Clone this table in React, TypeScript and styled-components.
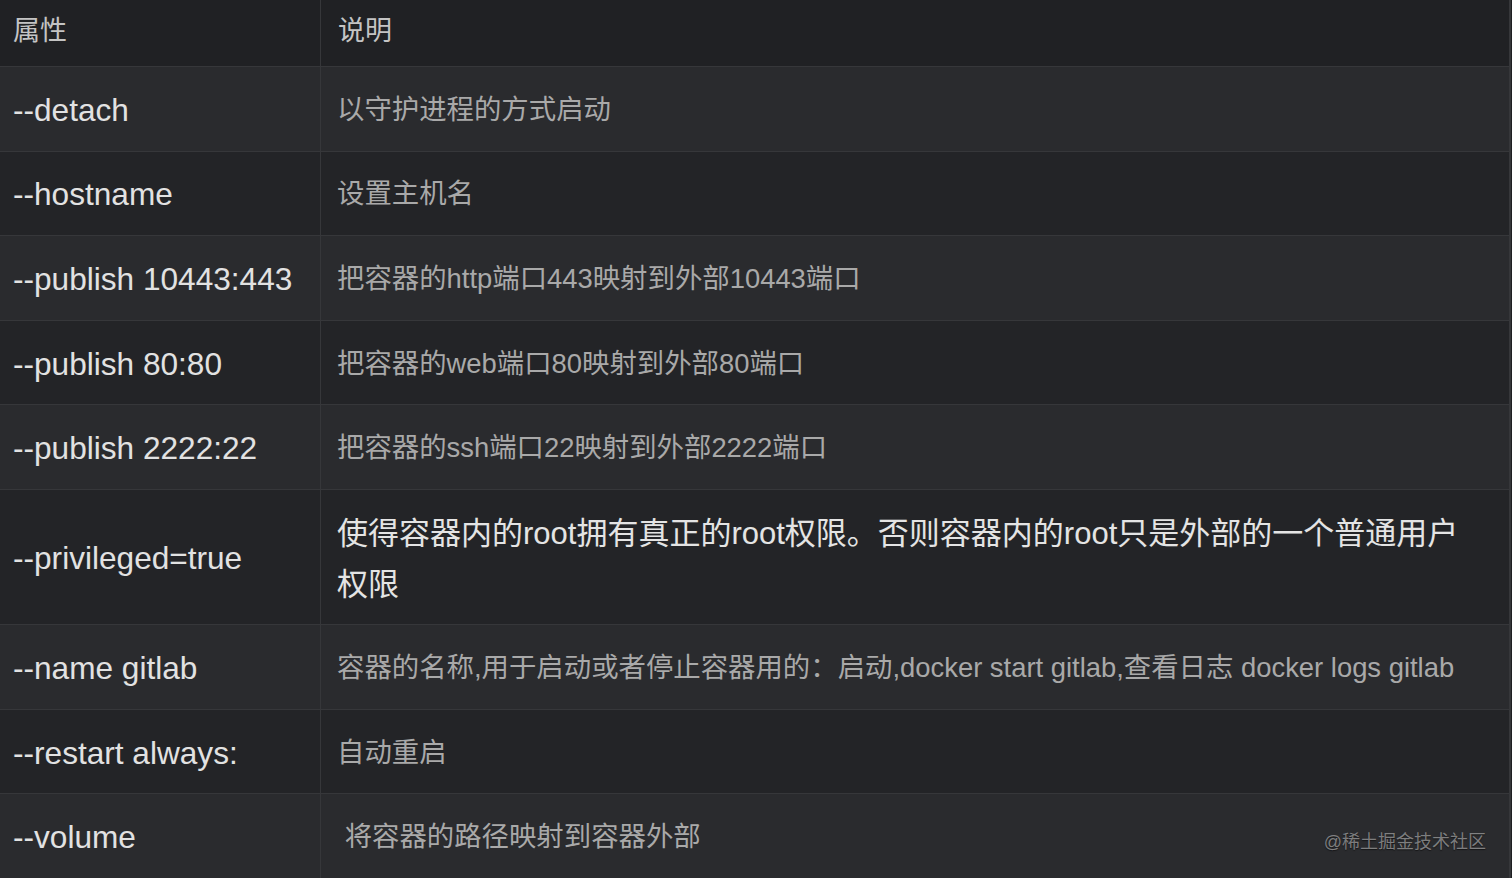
import React from 'react';
import styled, { createGlobalStyle } from 'styled-components';

const GlobalStyle = createGlobalStyle`
	html, body {
		margin: 0;
		padding: 0;
		background: #1e1f22;
	}
	body {
		font-family: "Liberation Sans", "Noto Sans CJK SC", sans-serif;
		overflow: hidden;
	}
`;

const Page = styled.div`
	position: relative;
	width: 1512px;
	height: 878px;
	overflow: hidden;
`;

const Table = styled.table`
	width: 1511px;
	border-collapse: collapse;
	table-layout: fixed;
	border-right: 2px solid #36373a;
`;

const HeadCell = styled.th`
	height: 57px;
	padding: 0 13px 9px;
	text-align: left;
	font-weight: normal;
	font-size: 27px;
	color: #c4c4c4;
	background: #202124;
	border-bottom: 1px solid #36373a;
	border-left: 1px solid #36373a;
	&:first-child {
		border-left: none;
		width: 294px;
	}
	&:last-child {
		padding-left: 17px;
	}
`;

const Row = styled.tr<{ $odd: boolean }>`
	background: ${(p) => (p.$odd ? '#2a2b2e' : '#232427')};
`;

const KeyCell = styled.td`
	height: 80.6px;
	padding: 3px 13px 0;
	font-size: 31.6px;
	color: #e2e2e2;
	border-bottom: 1px solid #36373a;
	white-space: nowrap;
`;

const DescCell = styled.td<{ $strong?: boolean; $tall?: boolean }>`
	height: ${(p) => (p.$tall ? '131.2px' : '80.6px')};
	padding: 3px 30px 0 16px;
	font-size: ${(p) => (p.$strong ? '31px' : '27.4px')};
	line-height: ${(p) => (p.$strong ? '51px' : '1.2')};
	color: ${(p) => (p.$strong ? '#e4e4e4' : '#a9a9a9')};
	border-bottom: 1px solid #36373a;
	border-left: 1px solid #36373a;
	white-space: pre-wrap;
`;

const Watermark = styled.div`
	position: absolute;
	right: 26px;
	bottom: 25px;
	font-size: 18px;
	color: rgba(190, 190, 190, 0.6);
	text-shadow: 0 1px 1px rgba(0, 0, 0, 0.5);
`;

const rows: { key: string; desc: string; strong?: boolean }[] = [
	{ key: '--detach', desc: '以守护进程的方式启动' },
	{ key: '--hostname', desc: '设置主机名' },
	{ key: '--publish 10443:443', desc: '把容器的http端口443映射到外部10443端口' },
	{ key: '--publish 80:80', desc: '把容器的web端口80映射到外部80端口' },
	{ key: '--publish 2222:22', desc: '把容器的ssh端口22映射到外部2222端口' },
	{
		key: '--privileged=true',
		desc: '使得容器内的root拥有真正的root权限。否则容器内的root只是外部的一个普通用户权限',
		strong: true,
	},
	{
		key: '--name gitlab',
		desc: '容器的名称,用于启动或者停止容器用的：启动,docker start gitlab,查看日志 docker logs gitlab',
	},
	{ key: '--restart always:', desc: '自动重启' },
	{ key: '--volume', desc: ' 将容器的路径映射到容器外部' },
];

function App() {
	return (
		<Page>
			<GlobalStyle />
			<Table>
				<thead>
					<tr>
						<HeadCell>属性</HeadCell>
						<HeadCell>说明</HeadCell>
					</tr>
				</thead>
				<tbody>
					{rows.map((r, i) => (
						<Row key={r.key} $odd={i % 2 === 0}>
							<KeyCell>{r.key}</KeyCell>
							<DescCell $strong={r.strong} $tall={r.strong}>
								{r.desc}
							</DescCell>
						</Row>
					))}
				</tbody>
			</Table>
			<Watermark>@稀土掘金技术社区</Watermark>
		</Page>
	);
}

export default App;
